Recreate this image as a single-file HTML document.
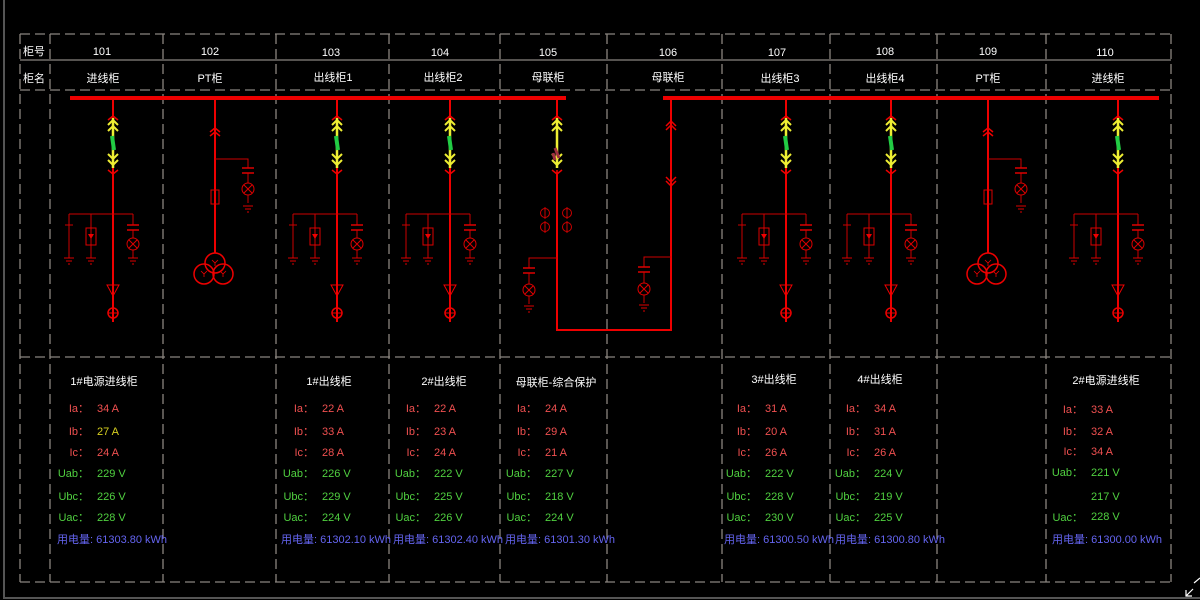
<!DOCTYPE html>
<html><head><meta charset="utf-8"><style>
html,body{margin:0;padding:0;background:#000;width:1200px;height:600px;overflow:hidden}
svg{display:block}
text{font-family:"Liberation Sans","Noto Sans CJK SC",sans-serif;font-size:11px}
</style></head><body>
<svg width="1200" height="600" viewBox="0 0 1200 600">
<defs>
<g id="gnd" stroke="#d00" stroke-width="1" fill="none"><path d="M-5,0H5M-3,3H3M-1,6H1"/></g>
<g id="lamp" stroke="#d00" stroke-width="1" fill="none"><circle r="6"/><path d="M-4,-4L4,4M4,-4L-4,4"/></g>
<g id="cap" stroke="#d00" stroke-width="1.5" fill="none"><path d="M-6,0H6M-6,5H6"/></g>
<g id="sw" fill="none">
 <path d="M0,0V20" stroke="#e00" stroke-width="2"/>
 <path d="M-5,22L0,18L5,22" stroke="#e00" stroke-width="1.5"/>
 <path d="M0,20V70" stroke="#ee3" stroke-width="2.5"/>
 <path d="M-5,27L0,22L5,27M-5,33L0,28L5,33M-5,56L0,61L5,56M-5,62L0,67L5,62" stroke="#ee3" stroke-width="2"/>
 <path d="M0,72L0,76M-5,72L0,76L5,72" stroke="#e00" stroke-width="1.5"/>
</g>
<g id="feeder" fill="none">
 <path d="M0,0V224" stroke="#e00" stroke-width="2"/>
 <use href="#sw"/>
 <path d="M-1,38L1,52" stroke="#2c4" stroke-width="4"/>
 <path d="M-44,116H20M-44,116V160M-48,127H-40M-22,116V160M20,116V127M20,132V140M20,152V160" stroke="#c00" stroke-width="1"/>
 <rect x="-27" y="130" width="10" height="17" stroke="#d00"/>
 <path d="M-25,136L-19,136L-22,141Z" fill="#e00"/>
 <use href="#cap" x="20" y="127"/>
 <use href="#lamp" x="20" y="146"/>
 <use href="#gnd" x="-44" y="160"/><use href="#gnd" x="-22" y="160"/><use href="#gnd" x="20" y="160"/>
 <path d="M-6,187L6,187L0,198Z" stroke="#e00" stroke-width="1"/>
 <circle cy="215" r="5" stroke="#e00" stroke-width="1.5"/>
 <path d="M-5,215H5" stroke="#e00" stroke-width="1"/>
</g>
<g id="pt" fill="none">
 <path d="M0,0V155" stroke="#e00" stroke-width="2"/>
 <path d="M-5,34L0,30L5,34M-5,38L0,34L5,38" stroke="#e00" stroke-width="1.5"/>
 <path d="M0,61H33V70M33,75V85M33,97V105" stroke="#c00" stroke-width="1"/>
 <use href="#cap" x="33" y="70"/><use href="#lamp" x="33" y="91"/><use href="#gnd" x="33" y="108"/>
 <rect x="-4" y="92" width="8" height="14" stroke="#d00"/>
 <g stroke="#e00" stroke-width="1.5"><circle cy="165" r="10"/><circle cx="-11" cy="176" r="10"/><circle cx="8" cy="176" r="10"/></g>
 <path d="M-3,162L0,165L3,162M0,165V168M-14,173L-11,176L-8,173M-11,176V179M5,173L8,176L11,173M8,176V179" stroke="#e00" stroke-width="0.8"/>
</g>
</defs>

<path d="M4,0V598H1200" stroke="#555" stroke-width="2" fill="none"/>
<g stroke="#8a857f" stroke-width="1.3" stroke-dasharray="10,5" fill="none">
 <path d="M20,34H1171M20,90H1171M20,357H1171M20,582H1171"/>
 <path d="M20,34V582M50,34V582M163,34V582M276,34V582M389,34V582M500,34V582M607,34V582M722,34V582M830,34V582M937,34V582M1046,34V582M1171,34V582"/>
</g>
<path d="M20,60H1171" stroke="#8a857f" stroke-width="1.3"/>

<g fill="#fff" text-anchor="middle">
<text x="34" y="55">柜号</text><text x="34" y="82">柜名</text>
<text x="102" y="55">101</text><text x="210" y="55">102</text><text x="331" y="56">103</text><text x="440" y="56">104</text><text x="548" y="56">105</text><text x="668" y="56">106</text><text x="777" y="56">107</text><text x="885" y="55">108</text><text x="988" y="55">109</text><text x="1105" y="56">110</text>
<text x="103" y="82">进线柜</text><text x="210" y="82">PT柜</text><text x="333" y="81">出线柜1</text><text x="443" y="81">出线柜2</text><text x="548" y="81">母联柜</text><text x="668" y="81">母联柜</text><text x="780" y="82">出线柜3</text><text x="885" y="82">出线柜4</text><text x="988" y="82">PT柜</text><text x="1108" y="82">进线柜</text>
</g>

<path d="M70,98H566M663,98H1159" stroke="#e00" stroke-width="4"/>

<use href="#feeder" x="113" y="98"/>
<use href="#feeder" x="337" y="98"/>
<use href="#feeder" x="450" y="98"/>
<use href="#feeder" x="786" y="98"/>
<use href="#feeder" x="891" y="98"/>
<use href="#feeder" x="1118" y="98"/>
<use href="#pt" x="215" y="98"/>
<use href="#pt" x="988" y="98"/>

<g fill="none">
 <use href="#sw" x="557" y="98"/>
 <path d="M555,148L559,158M553,153L555,160" stroke="#a03040" stroke-width="3"/>
 <path d="M557,174V330H671V98" stroke="#e00" stroke-width="2"/>
 <path d="M666,126L671,121L676,126M666,130L671,125L676,130M666,177L671,182L676,177M666,181L671,186L676,181" stroke="#e00" stroke-width="1.5"/>
 <g stroke="#c00" stroke-width="1">
  <circle cx="545" cy="213" r="4.5"/><circle cx="567" cy="213" r="4.5"/><circle cx="545" cy="227" r="4.5"/><circle cx="567" cy="227" r="4.5"/>
  <path d="M545,207V219M567,207V219M545,221V233M567,221V233"/>
  <path d="M557,258H529V268M529,273V284M529,296V304M671,257H644V267M644,272V283M644,295V303"/>
 </g>
 <use href="#cap" x="529" y="268"/><use href="#lamp" x="529" y="290"/><use href="#gnd" x="529" y="306"/>
 <use href="#cap" x="644" y="267"/><use href="#lamp" x="644" y="289"/><use href="#gnd" x="644" y="305"/>
</g>

<g fill="#fff" text-anchor="middle">
<text x="104" y="385">1#电源进线柜</text><text x="329" y="385">1#出线柜</text><text x="444" y="385">2#出线柜</text><text x="556" y="386">母联柜-综合保护</text><text x="774" y="383">3#出线柜</text><text x="880" y="383">4#出线柜</text><text x="1106" y="384">2#电源进线柜</text>
</g>
<g text-anchor="end">
 <g fill="#f05050"><text x="89" y="412">Ia：</text><text x="89" y="435">Ib：</text><text x="89" y="456">Ic：</text>
 <text x="314" y="412">Ia：</text><text x="314" y="435">Ib：</text><text x="314" y="456">Ic：</text>
 <text x="426" y="412">Ia：</text><text x="426" y="435">Ib：</text><text x="426" y="456">Ic：</text>
 <text x="537" y="412">Ia：</text><text x="537" y="435">Ib：</text><text x="537" y="456">Ic：</text>
 <text x="757" y="412">Ia：</text><text x="757" y="435">Ib：</text><text x="757" y="456">Ic：</text>
 <text x="866" y="412">Ia：</text><text x="866" y="435">Ib：</text><text x="866" y="456">Ic：</text>
 <text x="1083" y="413">Ia：</text><text x="1083" y="435">Ib：</text><text x="1083" y="455">Ic：</text></g>
 <g fill="#50d040"><text x="89" y="477">Uab：</text><text x="89" y="500">Ubc：</text><text x="89" y="521">Uac：</text>
 <text x="314" y="477">Uab：</text><text x="314" y="500">Ubc：</text><text x="314" y="521">Uac：</text>
 <text x="426" y="477">Uab：</text><text x="426" y="500">Ubc：</text><text x="426" y="521">Uac：</text>
 <text x="537" y="477">Uab：</text><text x="537" y="500">Ubc：</text><text x="537" y="521">Uac：</text>
 <text x="757" y="477">Uab：</text><text x="757" y="500">Ubc：</text><text x="757" y="521">Uac：</text>
 <text x="866" y="477">Uab：</text><text x="866" y="500">Ubc：</text><text x="866" y="521">Uac：</text>
 <text x="1083" y="476">Uab：</text><text x="1083" y="521">Uac：</text></g>
</g>
<g fill="#f05050">
 <text x="97" y="412">34 A</text><text x="97" y="435" fill="#d8d020">27 A</text><text x="97" y="456">24 A</text>
 <text x="322" y="412">22 A</text><text x="322" y="435">33 A</text><text x="322" y="456">28 A</text>
 <text x="434" y="412">22 A</text><text x="434" y="435">23 A</text><text x="434" y="456">24 A</text>
 <text x="545" y="412">24 A</text><text x="545" y="435">29 A</text><text x="545" y="456">21 A</text>
 <text x="765" y="412">31 A</text><text x="765" y="435">20 A</text><text x="765" y="456">26 A</text>
 <text x="874" y="412">34 A</text><text x="874" y="435">31 A</text><text x="874" y="456">26 A</text>
 <text x="1091" y="413">33 A</text><text x="1091" y="435">32 A</text><text x="1091" y="455">34 A</text>
</g>
<g fill="#50d040">
 <text x="97" y="477">229 V</text><text x="97" y="500">226 V</text><text x="97" y="521">228 V</text>
 <text x="322" y="477">226 V</text><text x="322" y="500">229 V</text><text x="322" y="521">224 V</text>
 <text x="434" y="477">222 V</text><text x="434" y="500">225 V</text><text x="434" y="521">226 V</text>
 <text x="545" y="477">227 V</text><text x="545" y="500">218 V</text><text x="545" y="521">224 V</text>
 <text x="765" y="477">222 V</text><text x="765" y="500">228 V</text><text x="765" y="521">230 V</text>
 <text x="874" y="477">224 V</text><text x="874" y="500">219 V</text><text x="874" y="521">225 V</text>
 <text x="1091" y="476">221 V</text><text x="1091" y="500">217 V</text><text x="1091" y="520">228 V</text>
</g>
<g fill="#6464f0" font-size="10">
 <text x="57" y="543">用电量: 61303.80 kWh</text><text x="281" y="543">用电量: 61302.10 kWh</text><text x="393" y="543">用电量: 61302.40 kWh</text><text x="505" y="543">用电量: 61301.30 kWh</text>
 <text x="724" y="543">用电量: 61300.50 kWh</text><text x="835" y="543">用电量: 61300.80 kWh</text><text x="1052" y="543">用电量: 61300.00 kWh</text>
</g>
<path d="M1186,596L1193,589M1186,590V596H1192M1194,583L1200,578" stroke="#fff" stroke-width="1.2" fill="none"/>
</svg>
</body></html>
